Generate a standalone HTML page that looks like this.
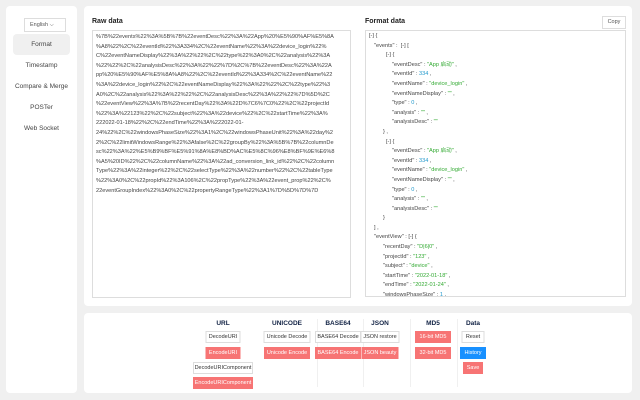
<!DOCTYPE html>
<html><head><meta charset="utf-8"><style>
*{box-sizing:border-box;margin:0;padding:0}
body{width:640px;height:400px;background:#f0f0f0;font-family:"Liberation Sans","Noto Sans CJK SC",sans-serif;position:relative;overflow:hidden;color:#333}
.card{position:absolute;background:#fff;border-radius:4px}
.side{left:6px;top:6px;width:71px;height:387px}
.main{left:84px;top:6px;width:548px;height:300px}
.bot{left:84px;top:313px;width:548px;height:80px}
.sel{position:absolute;left:18px;top:12px;width:42px;height:14px;border:1px solid #ddd;font-size:5.5px;line-height:12px;padding-left:5px;color:#555}
.nav{position:absolute;left:7px;width:57px;font-size:6.5px;text-align:center;color:#444}
.nav.a{background:#f0f0f0;border-radius:4px;height:21px;line-height:21px}
.lbl{position:absolute;font-size:7px;font-weight:bold;color:#222}
.box{position:absolute;border:1px solid #ddd}
.raw{font-size:5.6px;line-height:9.6px;color:#444;padding:2px 3px;word-break:break-all;white-space:pre;overflow:hidden}
.js{font-size:5.6px;line-height:9.6px;color:#444;padding:1px 3px;overflow:hidden}
.js div{white-space:pre}
.s{color:#3a3}.n{color:#29c}
.copy{position:absolute;left:518px;top:10px;width:24px;height:13px;border:1px solid #ddd;font-size:5.5px;text-align:center;line-height:11px;color:#555}
.h{position:absolute;top:7px;font-size:6.5px;font-weight:bold;color:#124;transform:translateX(-50%)}
.b{position:absolute;height:12px;font-size:5.5px;line-height:10px;text-align:center;border:1px solid #ddd;color:#333;background:#fff;transform:translateX(-50%);white-space:nowrap}
.r{background:#f77474;border-color:#f77474;color:#fff}
.bl{background:#1890ff;border-color:#1890ff;color:#fff}
.d{position:absolute;top:6px;width:1px;height:68px;background:#f0f0f0}
</style></head><body>
<div class="card side">
<div class="sel">English ⌵</div>
<div class="nav a" style="top:28px">Format</div>
<div class="nav" style="top:56px">Timestamp</div>
<div class="nav" style="top:77px">Compare &amp; Merge</div>
<div class="nav" style="top:98px">POSTer</div>
<div class="nav" style="top:119px">Web Socket</div>
</div>
<div class="card main">
<div class="lbl" style="left:8px;top:12px">Raw data</div>
<div class="box raw" style="left:8px;top:24px;width:259px;height:268px">%7B%22events%22%3A%5B%7B%22eventDesc%22%3A%22App%20%E5%90%AF%E5%8A
%A8%22%2C%22eventId%22%3A334%2C%22eventName%22%3A%22device_login%22%
C%22eventNameDisplay%22%3A%22%22%2C%22type%22%3A0%2C%22analysis%22%3A
%22%22%2C%22analysisDesc%22%3A%22%22%7D%2C%7B%22eventDesc%22%3A%22A
pp%20%E5%90%AF%E5%8A%A8%22%2C%22eventId%22%3A334%2C%22eventName%22
%3A%22device_login%22%2C%22eventNameDisplay%22%3A%22%22%2C%22type%22%3
A0%2C%22analysis%22%3A%22%22%2C%22analysisDesc%22%3A%22%22%7D%5D%2C
%22eventView%22%3A%7B%22recentDay%22%3A%22D%7C6%7C0%22%2C%22projectId
%22%3A%22123%22%2C%22subject%22%3A%22device%22%2C%22startTime%22%3A%
222022-01-18%22%2C%22endTime%22%3A%222022-01-
24%22%2C%22windowsPhaseSize%22%3A1%2C%22windowsPhaseUnit%22%3A%22day%2
2%2C%22limitWindowsRange%22%3Afalse%2C%22groupBy%22%3A%5B%7B%22columnDe
sc%22%3A%22%E5%B9%BF%E5%91%8A%E8%BD%AC%E5%8C%96%E8%BF%9E%E6%8
%A5%20ID%22%2C%22columnName%22%3A%22ad_conversion_link_id%22%2C%22column
Type%22%3A%22integer%22%2C%22selectType%22%3A%22number%22%2C%22tableType
%22%3A0%2C%22propId%22%3A106%2C%22propType%22%3A%22event_prop%22%2C%
22eventGroupIndex%22%3A0%2C%22propertyRangeType%22%3A1%7D%5D%7D%7D</div>
<div class="lbl" style="left:281px;top:12px">Format data</div>
<div class="copy">Copy</div>
<div class="box js" style="left:281px;top:24px;width:261px;height:267px">
<div>[-] {</div>
<div style="padding-left:5px">"events" :  [-] [</div>
<div style="padding-left:17px">[-] {</div>
<div style="padding-left:23px">"eventDesc" : <span class="s">"App 启动"</span> ,</div>
<div style="padding-left:23px">"eventId" : <span class="n">334</span> ,</div>
<div style="padding-left:23px">"eventName" : <span class="s">"device_login"</span> ,</div>
<div style="padding-left:23px">"eventNameDisplay" : <span class="s">""</span> ,</div>
<div style="padding-left:23px">"type" : <span class="n">0</span> ,</div>
<div style="padding-left:23px">"analysis" : <span class="s">""</span> ,</div>
<div style="padding-left:23px">"analysisDesc" : <span class="s">""</span></div>
<div style="padding-left:14px">} ,</div>
<div style="padding-left:17px">[-] {</div>
<div style="padding-left:23px">"eventDesc" : <span class="s">"App 启动"</span> ,</div>
<div style="padding-left:23px">"eventId" : <span class="n">334</span> ,</div>
<div style="padding-left:23px">"eventName" : <span class="s">"device_login"</span> ,</div>
<div style="padding-left:23px">"eventNameDisplay" : <span class="s">""</span> ,</div>
<div style="padding-left:23px">"type" : <span class="n">0</span> ,</div>
<div style="padding-left:23px">"analysis" : <span class="s">""</span> ,</div>
<div style="padding-left:23px">"analysisDesc" : <span class="s">""</span></div>
<div style="padding-left:14px">}</div>
<div style="padding-left:5px">] ,</div>
<div style="padding-left:5px">"eventView" : [-] {</div>
<div style="padding-left:14px">"recentDay" : <span class="s">"D|6|0"</span> ,</div>
<div style="padding-left:14px">"projectId" : <span class="s">"123"</span> ,</div>
<div style="padding-left:14px">"subject" : <span class="s">"device"</span> ,</div>
<div style="padding-left:14px">"startTime" : <span class="s">"2022-01-18"</span> ,</div>
<div style="padding-left:14px">"endTime" : <span class="s">"2022-01-24"</span> ,</div>
<div style="padding-left:14px">"windowsPhaseSize" : <span class="n">1</span> ,</div>
</div>
</div>
<div class="card bot">
<div class="d" style="left:233px"></div><div class="d" style="left:279px"></div><div class="d" style="left:326px"></div><div class="d" style="left:373px"></div>
<div class="h" style="left:139px">URL</div>
<div class="h" style="left:203px">UNICODE</div>
<div class="h" style="left:254px">BASE64</div>
<div class="h" style="left:296px">JSON</div>
<div class="h" style="left:349px">MD5</div>
<div class="h" style="left:389px">Data</div>
<div class="b" style="left:139px;top:18px;width:35px">DecodeURI</div>
<div class="b r" style="left:139px;top:34px;width:35px">EncodeURI</div>
<div class="b" style="left:139px;top:49px;width:60px">DecodeURIComponent</div>
<div class="b r" style="left:139px;top:64px;width:60px">EncodeURIComponent</div>
<div class="b" style="left:203px;top:18px;width:47px">Unicode Decode</div>
<div class="b r" style="left:203px;top:34px;width:46px">Unicode Encode</div>
<div class="b" style="left:254px;top:18px;width:46px">BASE64 Decode</div>
<div class="b r" style="left:254px;top:34px;width:46px">BASE64 Encode</div>
<div class="b" style="left:296px;top:18px;width:39px">JSON restore</div>
<div class="b r" style="left:296px;top:34px;width:37px">JSON beauty</div>
<div class="b r" style="left:349px;top:18px;width:36px">16-bit MD5</div>
<div class="b r" style="left:349px;top:34px;width:36px">32-bit MD5</div>
<div class="b" style="left:389px;top:18px;width:23px">Reset</div>
<div class="b bl" style="left:389px;top:34px;width:26px">History</div>
<div class="b r" style="left:389px;top:49px;width:20px">Save</div>
</div>
</body></html>
